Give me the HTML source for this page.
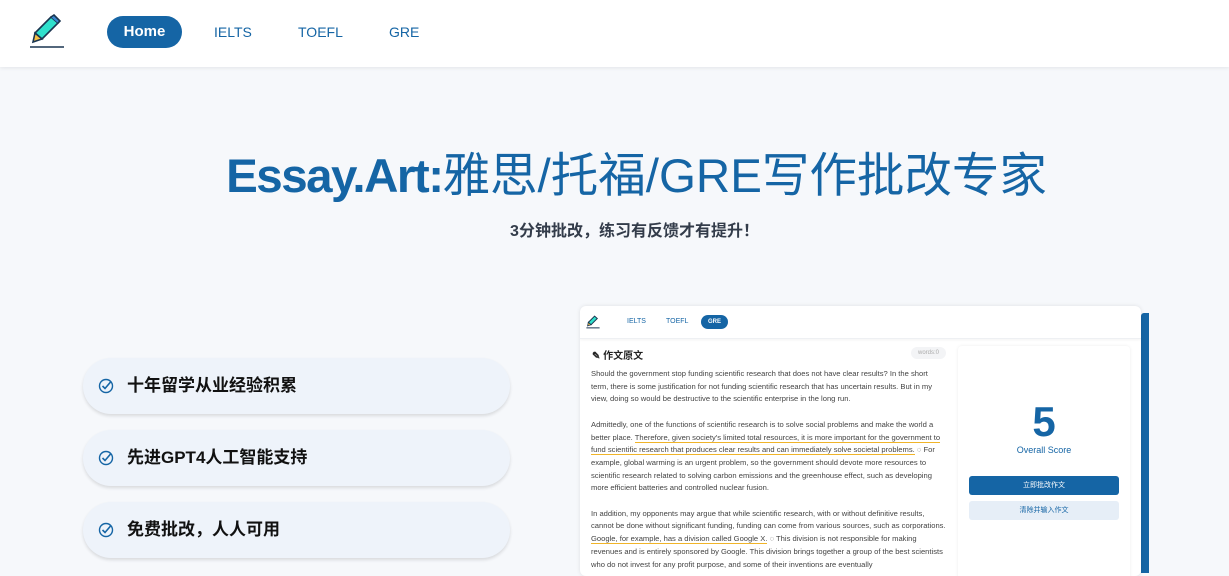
<!DOCTYPE html>
<html><head><meta charset="utf-8"><style>
*{margin:0;padding:0;box-sizing:border-box}
body{width:1229px;height:564px;overflow:hidden;background:#f6f8fb;font-family:"Liberation Sans","Noto Sans CJK SC",sans-serif;position:relative}
.nav{position:absolute;left:0;top:0;width:1229px;height:67px;background:#fff;box-shadow:0 1px 4px rgba(0,0,0,.08)}
.nav a{position:absolute;top:24px;font-size:14px;color:#1565a5;text-decoration:none}
.home{position:absolute;left:107px;top:16px;width:75px;height:32px;border-radius:16px;background:#1565a5;color:#fff;font-weight:bold;font-size:15px;text-align:center;line-height:32px}
h1{position:absolute;left:22px;width:1229px;top:137px;text-align:center;font-size:47.5px;font-weight:normal;color:#1565a5;white-space:nowrap}
h1 b{letter-spacing:-1.5px}
.sub{position:absolute;left:0;width:1269px;top:217px;text-align:center;font-size:16px;font-weight:bold;color:#333c4a}
.pill{position:absolute;left:83px;width:427px;height:56px;border-radius:28px;background:#eef3fa;box-shadow:0 2px 3px rgba(0,0,0,.12);font-size:17px;font-weight:bold;color:#111;line-height:56px;padding-left:44px}
.pill svg{position:absolute;left:15px;top:20px}
.card{position:absolute;left:580px;top:306px;width:561px;height:270px;background:#fff;border-radius:6px;box-shadow:0 0 4px rgba(0,0,0,.1);overflow:hidden}
.bar{position:absolute;left:1141px;top:313px;width:8px;height:260px;background:#1565a5;border-radius:3px 0 0 0}
.cn{position:absolute;left:0;top:0;width:561px;height:33px;border-bottom:1px solid #eef0f3;box-shadow:0 1px 3px rgba(0,0,0,.05)}
.cn span{position:absolute;top:12px;font-size:7px;color:#1565a5}
.txt{position:absolute;left:11px;top:62px;width:356px;font-size:7.6px;line-height:12.7px;color:#444}
.u{border-bottom:1px solid #f0b429}
.right{position:absolute;left:378px;top:40px;width:172px;height:240px;background:#fff;box-shadow:0 0 3px rgba(0,0,0,.08);border-radius:4px}
</style></head><body>
<div class="nav">
<svg style="position:absolute;left:29px;top:14px" width="36" height="36" viewBox="0 0 36 36"><path d="M22 3 L29 9 L13 25 L6 19 Z" fill="#2fe0cc" stroke="#1a3550" stroke-width="1.6"/><path d="M22 3 L25 1 L31 7 L29 9" fill="#3a88d0" stroke="#1a3550" stroke-width="1.6"/><path d="M6 19 L4 28 L13 25 Z" fill="#f5c043" stroke="#1a3550" stroke-width="1.6"/><line x1="1" y1="33" x2="35" y2="33" stroke="#1a3550" stroke-width="1.6"/></svg>
<div class="home">Home</div>
<a style="left:214px">IELTS</a><a style="left:298px">TOEFL</a><a style="left:389px">GRE</a>
</div>
<h1><b>Essay.Art:</b>雅思/托福/GRE写作批改专家</h1>
<div class="sub">3分钟批改，练习有反馈才有提升！</div>
<div class="pill" style="top:358px"><svg width="16" height="16" viewBox="0 0 16 16"><circle cx="8" cy="8" r="6.5" fill="none" stroke="#1565a5" stroke-width="1.4"/><path d="M4.5 8 L7 10.5 L13 3.5" fill="none" stroke="#1565a5" stroke-width="1.6"/></svg>十年留学从业经验积累</div>
<div class="pill" style="top:430px"><svg width="16" height="16" viewBox="0 0 16 16"><circle cx="8" cy="8" r="6.5" fill="none" stroke="#1565a5" stroke-width="1.4"/><path d="M4.5 8 L7 10.5 L13 3.5" fill="none" stroke="#1565a5" stroke-width="1.6"/></svg>先进GPT4人工智能支持</div>
<div class="pill" style="top:502px"><svg width="16" height="16" viewBox="0 0 16 16"><circle cx="8" cy="8" r="6.5" fill="none" stroke="#1565a5" stroke-width="1.4"/><path d="M4.5 8 L7 10.5 L13 3.5" fill="none" stroke="#1565a5" stroke-width="1.6"/></svg>免费批改，人人可用</div>
<div class="bar"></div>
<div class="card">
<div class="cn">
<svg style="position:absolute;left:6px;top:8px" width="14" height="16" viewBox="0 0 36 36"><path d="M22 3 L29 9 L13 25 L6 19 Z" fill="#2fe0cc" stroke="#1a3550" stroke-width="2.5"/><path d="M6 19 L4 28 L13 25 Z" fill="#f5c043" stroke="#1a3550" stroke-width="2"/><line x1="1" y1="33" x2="35" y2="33" stroke="#1a3550" stroke-width="2.5"/></svg>
<span style="left:47px">IELTS</span><span style="left:86px">TOEFL</span>
<div style="position:absolute;left:121px;top:9px;width:27px;height:14px;border-radius:7px;background:#1565a5;color:#fff;font-size:6px;font-weight:bold;text-align:center;line-height:14px">GRE</div>
</div>
<div style="position:absolute;left:12px;top:41px;font-size:10px;font-weight:bold;color:#222">✎ 作文原文</div>
<div style="position:absolute;left:331px;top:41px;width:35px;height:12px;border-radius:6px;background:#f3f4f6;font-size:6px;color:#aaa;text-align:center;line-height:12px">words:0</div>
<div class="txt">Should the government stop funding scientific research that does not have clear results? In the short term, there is some justification for not funding scientific research that has uncertain results. But in my view, doing so would be destructive to the scientific enterprise in the long run.<br><br>Admittedly, one of the functions of scientific research is to solve social problems and make the world a better place. <span class="u">Therefore, given society's limited total resources, it is more important for the government to fund scientific research that produces clear results and can immediately solve societal problems.</span> ◌ For example, global warming is an urgent problem, so the government should devote more resources to scientific research related to solving carbon emissions and the greenhouse effect, such as developing more efficient batteries and controlled nuclear fusion.<br><br>In addition, my opponents may argue that while scientific research, with or without definitive results, cannot be done without significant funding, funding can come from various sources, such as corporations. <span class="u">Google, for example, has a division called Google X.</span> ◌ This division is not responsible for making revenues and is entirely sponsored by Google. This division brings together a group of the best scientists who do not invest for any profit purpose, and some of their inventions are eventually</div>
<div class="right">
<div style="position:absolute;left:0;width:172px;top:52px;text-align:center;font-size:42px;font-weight:bold;color:#1565a5">5</div>
<div style="position:absolute;left:0;width:172px;top:99px;text-align:center;font-size:9px;color:#1565a5">Overall Score</div>
<div style="position:absolute;left:11px;top:130px;width:150px;height:19px;border-radius:3px;background:#1565a5;color:#fff;font-size:7px;text-align:center;line-height:19px">立即批改作文</div>
<div style="position:absolute;left:11px;top:155px;width:150px;height:19px;border-radius:3px;background:#e6eef7;color:#1565a5;font-size:7px;text-align:center;line-height:19px">清除并输入作文</div>
</div>
</div>
</body></html>
